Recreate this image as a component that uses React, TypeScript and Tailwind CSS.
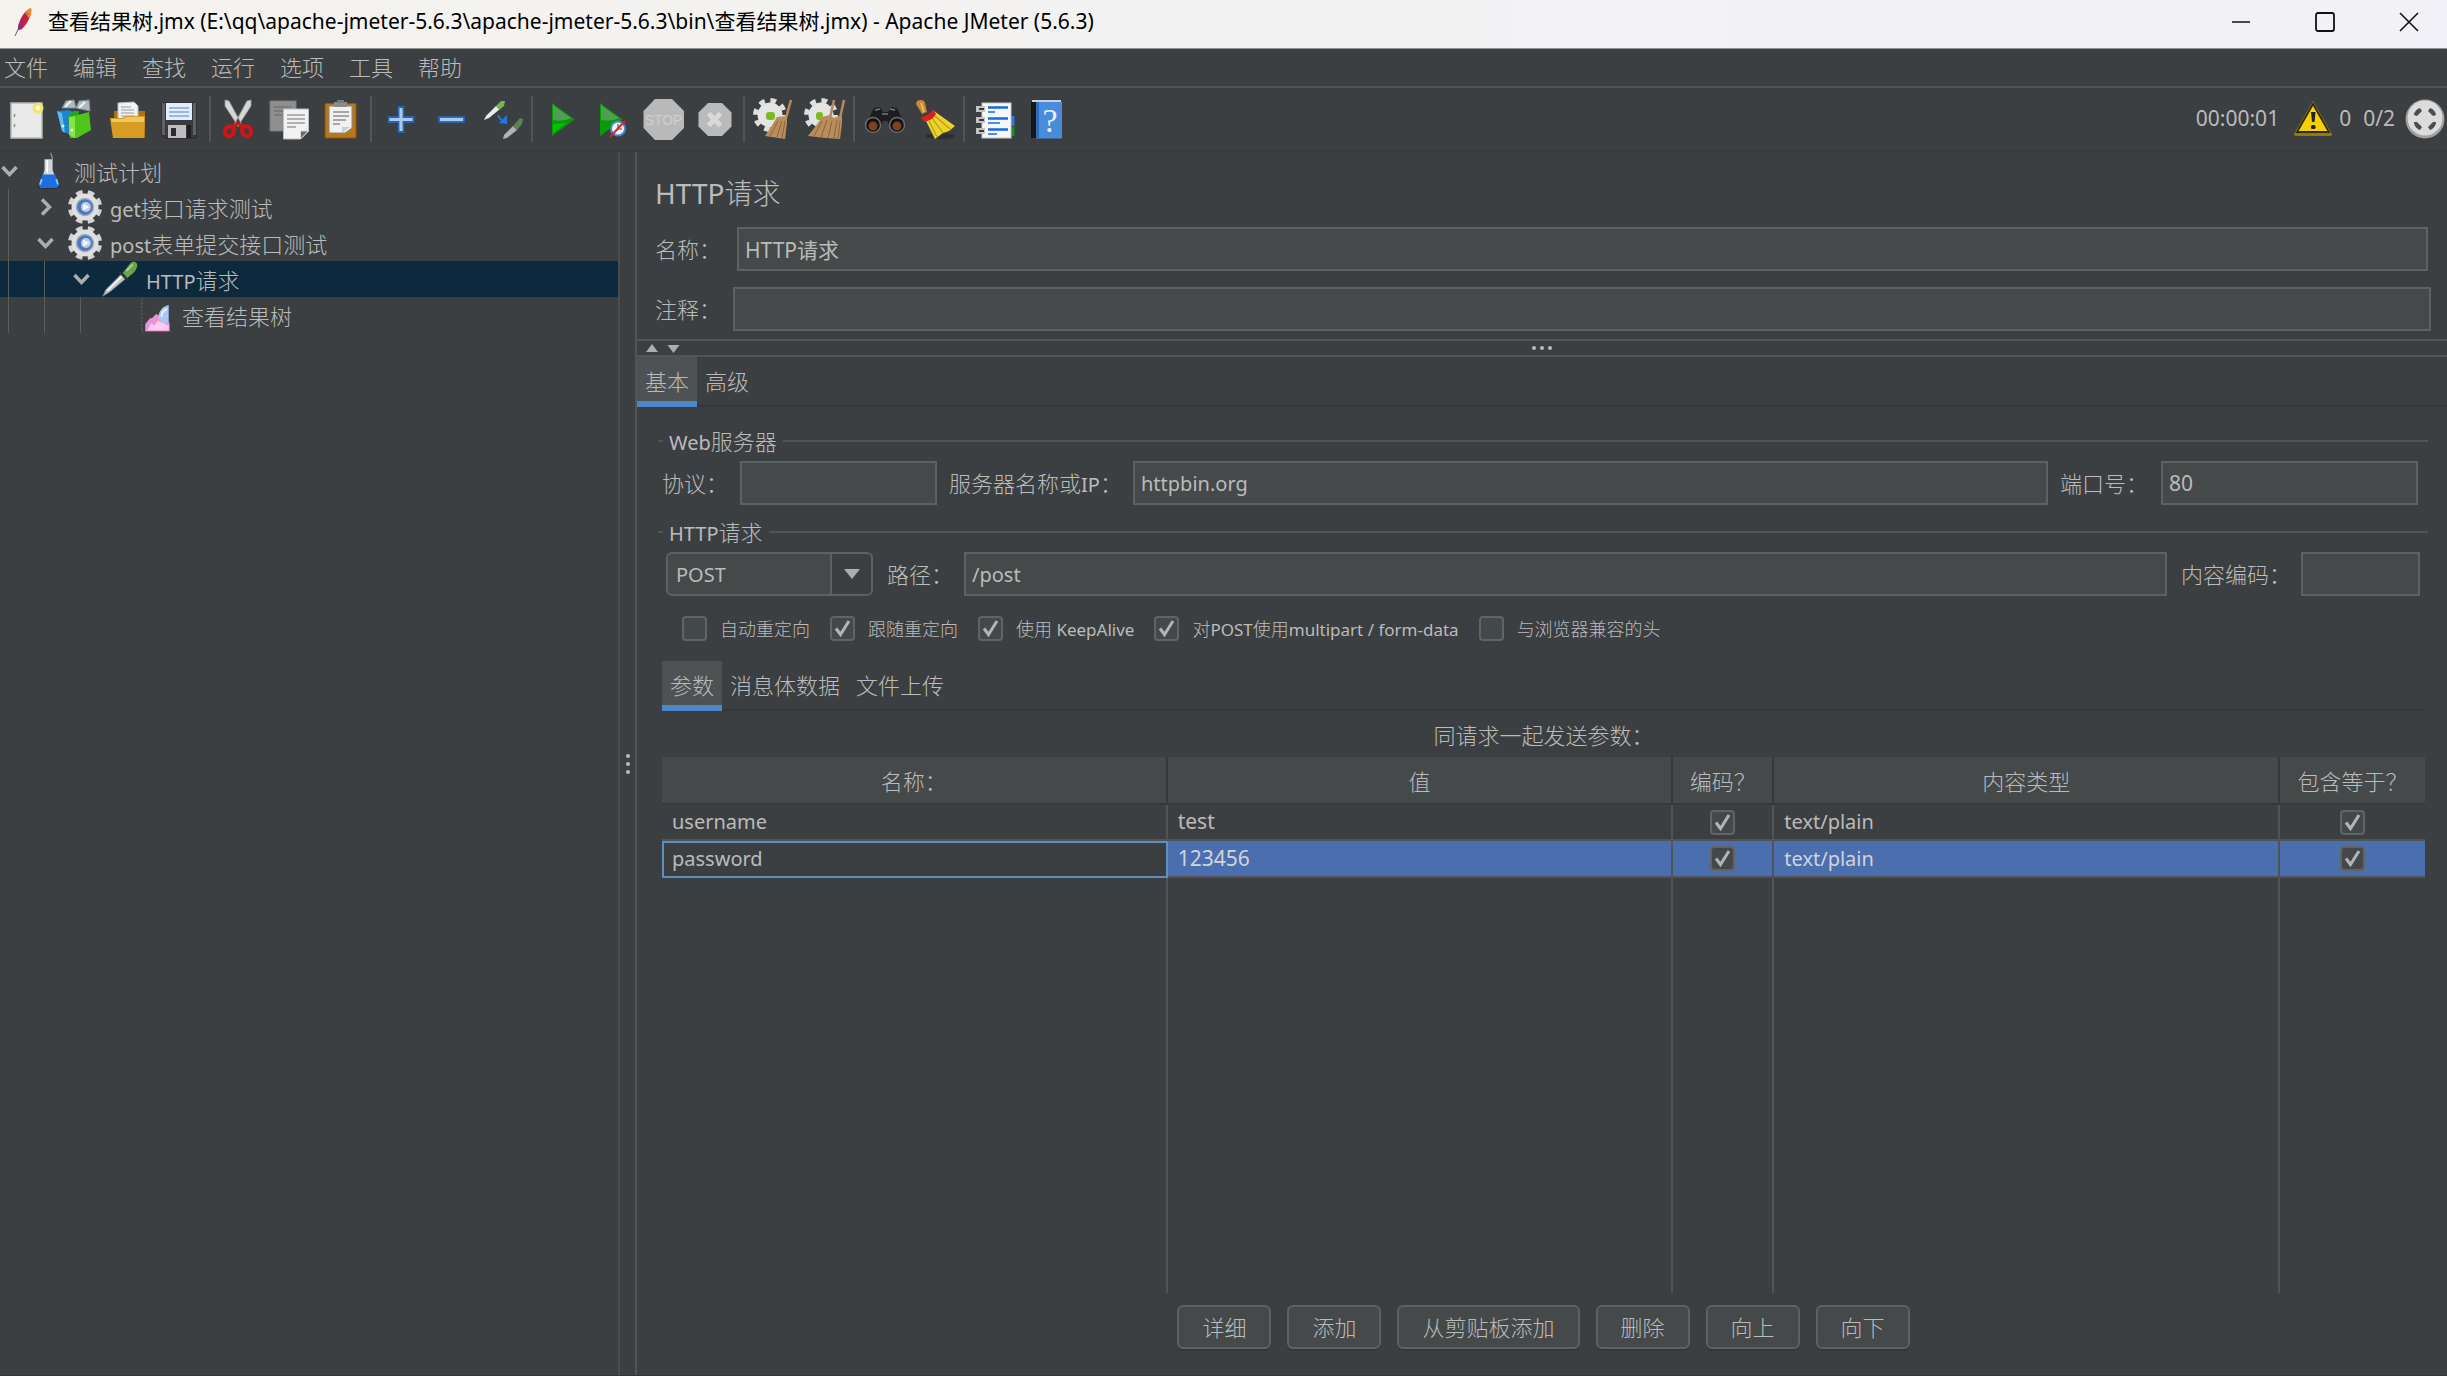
import React, { useState } from 'react';

type IconProps = { children: React.ReactNode; className?: string };

function Svg({ children, className = 'h-10 w-10' }: IconProps) {
  return (
    <svg viewBox="0 0 40 40" className={`${className} shrink-0 overflow-visible`} fill="none" aria-hidden="true">
      {children}
    </svg>
  );
}

/* ---------- toolbar icons ---------- */

const NewIcon = () => (
  <Svg>
    <rect x="3" y="4" width="31" height="35" fill="#e9e9e9" stroke="#b9b9b2" strokeWidth="1.5" />
    <path d="M6.500 15v3M6.500 25v3" stroke="#8f8f8f" strokeWidth="1.500" />
    <circle cx="30" cy="9" r="5.500" fill="#efe36a" />
    <circle cx="30" cy="9" r="2.500" fill="#fffbd0" />
  </Svg>
);

const TemplatesIcon = () => (
  <Svg>
    <path d="M3 9l4-7 8-1 2 8zM17 9l3-7 10-1 1 11z" fill="#aebbc2" stroke="#7e8c94" />
    <path d="M6 8l6-6M20 9l6-6" stroke="#eef2f4" strokeWidth="2" />
    <path d="M-2 12l12-1 6 3-4 22-9-4z" fill="#1b85cf" />
    <path d="M-2 12l5 2 3 20-3-2z" fill="#5fb9ee" />
    <path d="M9 18l5-6h6l-2 26-7 1z" fill="#23a51c" />
    <path d="M15 17l15-4 2 18-14 8-7 0z" fill="#4fc51c" />
    <path d="M10 18l6-1v22l-6-3z" fill="#86e24a" />
    <circle cx="13" cy="31" r="1.500" fill="#e9ffe0" />
    <circle cx="4" cy="27" r="1.500" fill="#d5efff" />
  </Svg>
);

const OpenIcon = () => (
  <Svg>
    <path d="M4 12h31v27H4z" fill="#a87414" />
    <path d="M8 4l16-1 4 4v17H8z" fill="#f2f2f2" stroke="#bdbdbd" />
    <path d="M11 8h10M11 11h13M11 14h13M11 17h13" stroke="#9b9b9b" />
    <path d="M0 19h12l4-2h19l-1 22H3z" fill="#d79c24" />
    <path d="M1 20h12l4-2h17v5H2z" fill="#efc662" />
  </Svg>
);

const SaveIcon = () => (
  <Svg>
    <path d="M1 4h34v35H4l-3-3z" fill="#3a3a3e" stroke="#26262a" />
    <path d="M1 4h3v32H1zM32 4h3v32h-3z" fill="#606066" />
    <rect x="5" y="4" width="26" height="17" fill="#e3eefb" />
    <path d="M8 9h20M8 13h20M8 17h20" stroke="#7fa6d6" strokeWidth="1.500" />
    <rect x="7" y="26" width="18" height="13" fill="#bdbdbd" />
    <rect x="10" y="29" width="5" height="8" fill="#2c2c2e" />
    <rect x="26" y="26" width="4" height="13" fill="#1f1f22" />
  </Svg>
);

const CutIcon = () => (
  <Svg>
    <path d="M5 1l4 1 13 24-4 1L5 7zM31 1l-4 1-13 24 4 1L31 7z" fill="#d6d6d6" stroke="#9c9c9c" strokeWidth=".8" />
    <ellipse cx="9.500" cy="32" rx="4.500" ry="5" stroke="#d21414" strokeWidth="4" transform="rotate(25 9 32)" />
    <ellipse cx="26.500" cy="32" rx="4.500" ry="5" stroke="#d21414" strokeWidth="4" transform="rotate(-25 27 32)" />
    <path d="M13 28l5-4 5 4" stroke="#d21414" strokeWidth="3" />
  </Svg>
);

const CopyIcon = () => (
  <Svg>
    <rect x="-1" y="2" width="26" height="30" fill="#8f8f8f" stroke="#7b7b7b" />
    <path d="M3 8h18M3 12h18M3 16h8" stroke="#747474" strokeWidth="1.500" />
    <path d="M12.500 10h25v22l-8 8h-17z" fill="#f2f2f2" stroke="#bcbcbc" />
    <path d="M16 16h18M16 20h18M16 24h18M16 28h9" stroke="#9d9d9d" strokeWidth="1.300" />
    <path d="M29.500 40v-8h8z" fill="#6a6a6a" stroke="#d9d9d9" />
  </Svg>
);

const PasteIcon = () => (
  <Svg>
    <rect x="3" y="4.500" width="31" height="34.500" rx="1" fill="#b9771a" stroke="#8b560d" />
    <path d="M7 7h23v22l-7 5H7z" fill="#f1f1f1" stroke="#7a8a86" />
    <rect x="12" y="3" width="13" height="5" fill="#8c8c86" />
    <path d="M15 1h7v3h-7z" fill="#7b7b76" />
    <path d="M11 13h16M11 17h16M11 21h13M11 25h7" stroke="#8e8e8e" strokeWidth="1.300" />
    <path d="M20 34v-6h8z" fill="#cfcfcf" />
  </Svg>
);

const PlusIcon = () => (
  <Svg>
    <path d="M17.500 8h5v10h10v5h-10v10h-5V23h-10v-5h10z" fill="#a9c9ee" stroke="#2a62ae" strokeWidth="1.800" />
  </Svg>
);

const MinusIcon = () => (
  <Svg>
    <rect x="7" y="18" width="25" height="5" fill="#a9c9ee" stroke="#2a62ae" strokeWidth="1.800" />
  </Svg>
);

const ToggleIcon = () => (
  <Svg>
    <path d="M1 21l2-4L13 7l4 3L6 19z" fill="#ececec" />
    <path d="M13 7l5-5 4 0-1 5-5 4z" fill="#79b356" />
    <path d="M15 16c1 3 3 5 6 6" stroke="#1f74f0" strokeWidth="2" />
    <path d="M24 16v9l-8-1z" fill="#1f74f0" />
    <path d="M20 40l1-4 9-9 4 4-10 8z" fill="#b0b3b0" />
    <path d="M30 27l7-8 3 1-1 5-5 6z" fill="#5f8350" />
  </Svg>
);

const PlayIcon = () => (
  <Svg>
    <path d="M10 4l22.500 16.500L10 37z" fill="#079c07" />
    <path d="M11 6l18 13c-6 3-12 3-18 2z" fill="#4f9f52" />
    <path d="M11 25l13-1-13 10z" fill="#06c206" />
  </Svg>
);

const PlayNoPauseIcon = () => (
  <Svg>
    <path d="M7 4l22.500 16.500L7 37z" fill="#079c07" />
    <path d="M8 6l18 13c-6 3-12 3-18 2z" fill="#4f9f52" />
    <circle cx="25" cy="29.500" r="7" fill="#eef4fb" stroke="#4a86c8" strokeWidth="2" />
    <path d="M25 25v5h4" stroke="#6f7f92" strokeWidth="1.500" />
    <path d="M17 38l15-16" stroke="#d82525" strokeWidth="2" />
  </Svg>
);

const StopIcon = () => (
  <Svg>
    <path d="M11 0h17l12 12v17L28 41H11L-.5 29V12z" fill="#b9b9b9" />
    <text x="19.500" y="26" textAnchor="middle" fontSize="14" fontFamily="Liberation Sans" fill="#cfcfcf">
      STOP
    </text>
  </Svg>
);

const ShutdownIcon = () => (
  <Svg>
    <path d="M13 4h14l9.500 9.500v14L27 37H13l-9.500-9.500v-14z" fill="#bababa" />
    <path d="M13.500 14.500l12 12M25.500 14.500l-12 12" stroke="#d9d9d9" strokeWidth="5" />
  </Svg>
);

function GearBody({ cx, cy }: { cx: number; cy: number }) {
  return (
    <g transform={`translate(${cx} ${cy})`}>
      <circle r="14.500" stroke="#dedede" strokeWidth="5" strokeDasharray="5.700 5.690" />
      <circle r="12.500" fill="#e4e4e4" />
    </g>
  );
}

const ClearIcon = () => (
  <Svg>
    <GearBody cx={16} cy={16} />
    <rect x="12" y="13" width="9" height="8" rx="3" fill="#79bd22" />
    <path d="M37 1l-5 18" stroke="#b58a5a" strokeWidth="2.500" />
    <path d="M23 18l10-1v7l-2 16-20-3 6-9z" fill="#b98d5c" />
    <path d="M24 22l-8 15M28 22l-5 16M31 22l-3 17" stroke="#8d6538" />
  </Svg>
);

const ClearAllIcon = () => (
  <Svg>
    <GearBody cx={16} cy={16} />
    <rect x="11" y="13" width="7" height="8" rx="3" fill="#79bd22" />
    <path d="M29 1l-4 18M39 1l-4 18" stroke="#b58a5a" strokeWidth="2.500" />
    <path d="M17 18l8-2 4 3 8-3v8l-2 16-14-1-18-2 7-9z" fill="#b98d5c" />
    <path d="M17 22l-8 15M22 21l-6 17M27 22l-4 17M32 21l-3 18M35 22l-2 17" stroke="#8d6538" />
  </Svg>
);

const SearchIcon = () => (
  <Svg>
    <path d="M10 9l6-1 3 5h5l3-5 6 1 8 17-4 7-10-3-4-8h-4l-4 8-10 3-4-7z" fill="#1d1d1f" />
    <circle cx="9" cy="26" r="7.500" fill="#111" stroke="#6c6c6c" strokeWidth="1.500" />
    <circle cx="33" cy="26" r="7.500" fill="#111" stroke="#6c6c6c" strokeWidth="1.500" />
    <circle cx="9" cy="27" r="4.500" fill="#7d4220" />
    <circle cx="33" cy="27" r="4.500" fill="#7d4220" />
    <path d="M11 11l5-1M26 10l5 1M18 15h6" stroke="#7b7b7b" strokeWidth="1.500" />
  </Svg>
);

const BroomIcon = () => (
  <Svg>
    <ellipse cx="25" cy="37" rx="15" ry="3" fill="#2c2e2f" />
    <path d="M1 5c0-5 8-5 9-1l2 9-5 2z" fill="#c98a33" />
    <path d="M6 4l3 9" stroke="#f0c679" strokeWidth="1.500" />
    <path d="M10 20l9-8 21 15-6 5-6 2-8 6z" fill="#ecd22e" />
    <path d="M14 22l8 16M17 19l11 15M20 17l15 13" stroke="#b79c12" strokeWidth="1.200" />
    <path d="M6 18c6-1 10-4 12-8l3 5c-3 5-7 7-12 8z" fill="#d42222" />
  </Svg>
);

const FunctionIcon = () => (
  <Svg>
    <rect x="36" y="17" width="4.500" height="10" fill="#2b78d8" />
    <rect x="36" y="28" width="4.500" height="9" fill="#13902a" />
    <rect x="8" y="4" width="29" height="35" fill="#f7f7f7" stroke="#c9c9c9" />
    <path d="M2 10h9M2 21h9M2 32h9" stroke="#c3c3c3" strokeWidth="6" />
    <path d="M5 10h5M5 21h5M5 32h5" stroke="#3d3d3d" strokeWidth="2" />
    <path d="M14 8.500h20M14 19.500h20M14 30.500h20" stroke="#1668e8" strokeWidth="2.500" />
    <path d="M14 13h7M14 24h12M14 35h9" stroke="#4b8df0" strokeWidth="2" />
  </Svg>
);

const HelpIcon = () => (
  <Svg>
    <path d="M6 3l5-1v37H6z" fill="#151618" />
    <path d="M7 2h29" stroke="#c8d3de" strokeWidth="2" />
    <rect x="11" y="3" width="26" height="36.500" fill="#4a8bdc" />
    <path d="M11 3h3v36h-3z" fill="#2f6bb8" />
    <text x="25" y="33" textAnchor="middle" fontSize="34" fontFamily="Liberation Serif" fill="#e6f1ff">
      ?
    </text>
  </Svg>
);

const WarningIcon = () => (
  <Svg>
    <path d="M20 2l19 33a2 2 0 0 1-2 2H3a2 2 0 0 1-2-2z" fill="#8e7b0c" />
    <path d="M20 5l16 28H4z" fill="#f6cf05" stroke="#2d2a10" strokeWidth="1.800" />
    <path d="M18 13h4.500l-1 10h-2.500z" fill="#222" />
    <rect x="18" y="26" width="4.500" height="4" rx="1.500" fill="#222" />
  </Svg>
);

const ThreadsIcon = () => (
  <Svg>
    <circle cx="20" cy="20" r="19.500" fill="#a0a0a0" />
    <circle cx="20" cy="19" r="17.500" fill="#dcdcdc" />
    <path
      d="M9 16c0-3 3-6 6-7l2 3-5 5zM31 16c0-3-3-6-6-7l-2 3 5 5zM9 23c0 4 3 7 6 8l2-3-5-5zM31 23c0 4-3 7-6 8l-2-3 5-5z"
      fill="#4b4d4e"
    />
  </Svg>
);

/* ---------- tree icons ---------- */

const FlaskIcon = () => (
  <Svg className="h-9 w-9">
    <ellipse cx="20" cy="38" rx="13" ry="2" fill="#2d3032" />
    <path d="M22 0l2 7" stroke="#8d9194" strokeWidth="1.500" />
    <path d="M15 7h9v12l6 16c0 3-2 4-4 4H13c-2 0-4-1-3-4l5-16z" fill="#cdd5da" />
    <path d="M13 24l14 0 4 11c0 3-2 4-4 4H13c-2 0-4-1-4-4z" fill="#1b6fe0" />
    <path d="M12 29l-2 6M28 29l2 6" stroke="#8fc2ff" strokeWidth="2" />
    <path d="M18 8v14" stroke="#ffffff" strokeWidth="2" />
  </Svg>
);

const GearIcon = () => (
  <Svg className="h-9 w-9">
    <circle cx="20" cy="20" r="16" stroke="#d4d4d4" strokeWidth="6" strokeDasharray="7 5.566" transform="rotate(9 20 20)" />
    <circle cx="20" cy="20" r="15" fill="#e0e0e0" />
    <circle cx="20" cy="20" r="9.500" fill="#5478b4" stroke="#9db0ce" strokeWidth="1.500" />
    <circle cx="21" cy="20" r="5.500" fill="#b9cdea" />
    <path d="M18 16l7 4-7 4z" fill="#f4f8fd" />
  </Svg>
);

const DropperIcon = () => (
  <Svg className="h-9 w-9">
    <path d="M0 39l3-7 18-18 5 5L8 34z" fill="#c2c6c4" stroke="#7d8280" />
    <path d="M5 33l17-17" stroke="#f5f5f5" strokeWidth="2" />
    <path d="M18 12l9 9" stroke="#2f3331" strokeWidth="2.500" />
    <path d="M22 13l8-10c3-4 9-2 8 3-1 3-2 5-4 7l-7 6z" fill="#6aa34c" />
    <path d="M26 11l7-7" stroke="#a8d68a" strokeWidth="2" />
  </Svg>
);

const ResultsIcon = () => (
  <Svg className="h-9 w-9">
    <path d="M3 2v36h33" stroke="#5a5d5e" strokeWidth="1.500" strokeDasharray="2 2" />
    <path d="M7 38V30l5-6 3-1 4-4 8 4 7 6v9z" fill="#f090d4" />
    <path d="M9 37l5-8 3 3 4-6 12 6v5z" fill="#f8cdee" />
    <path d="M33 9v19c-6 3-13-2-11-8 1-6 6-10 11-11z" fill="#a9c8f5" />
    <path d="M31 13c-4 2-6 5-6 9" stroke="#edf5ff" strokeWidth="2" />
  </Svg>
);

const FeatherIcon = () => (
  <svg viewBox="0 0 18 30" className="h-[30px] w-[18px] shrink-0" fill="none" aria-hidden="true">
    <path d="M17 1c1 5-2 14-9 21l-4 1c0-8 5-19 13-22z" fill="#c9203f" />
    <path d="M17 1c1 3 0 6-2 10l-4-5c2-3 4-4 6-5z" fill="#f08a24" />
    <path d="M4 23l4-1-3-6c-1 3-1 5-1 7z" fill="#8c2a78" />
    <path d="M14 6C9 12 5 20 1 29" stroke="#6a3a8c" strokeWidth=".9" />
  </svg>
);

function Chevron({ open }: { open: boolean }) {
  return (
    <svg viewBox="0 0 20 20" className="h-5 w-5 shrink-0" fill="none" stroke="#adadad" strokeWidth="3.500" aria-hidden="true">
      {open ? <path d="M2.500 6l7 7.500 7-7.500" /> : <path d="M6 2.500l7.500 7.500L6 17.500" />}
    </svg>
  );
}

/* ---------- data ---------- */

const MENUS = ['文件', '编辑', '查找', '运行', '选项', '工具', '帮助'];

const TOOLBAR: { label: string; Icon: React.FC }[][] = [
  [
    { label: '新建', Icon: NewIcon },
    { label: '模板', Icon: TemplatesIcon },
    { label: '打开', Icon: OpenIcon },
    { label: '保存', Icon: SaveIcon },
  ],
  [
    { label: '剪切', Icon: CutIcon },
    { label: '复制', Icon: CopyIcon },
    { label: '粘贴', Icon: PasteIcon },
  ],
  [
    { label: '展开', Icon: PlusIcon },
    { label: '收起', Icon: MinusIcon },
    { label: '切换', Icon: ToggleIcon },
  ],
  [
    { label: '启动', Icon: PlayIcon },
    { label: '不停顿启动', Icon: PlayNoPauseIcon },
    { label: '停止', Icon: StopIcon },
    { label: '关闭', Icon: ShutdownIcon },
  ],
  [
    { label: '清除', Icon: ClearIcon },
    { label: '清除全部', Icon: ClearAllIcon },
  ],
  [
    { label: '查找', Icon: SearchIcon },
    { label: '重置查找', Icon: BroomIcon },
  ],
  [
    { label: '函数助手', Icon: FunctionIcon },
    { label: '帮助', Icon: HelpIcon },
  ],
];

const TREE: { label: string; depth: number; open?: boolean; leaf?: boolean; Icon: React.FC }[] = [
  { label: '测试计划', depth: 0, open: true, Icon: FlaskIcon },
  { label: 'get接口请求测试', depth: 1, open: false, Icon: GearIcon },
  { label: 'post表单提交接口测试', depth: 1, open: true, Icon: GearIcon },
  { label: 'HTTP请求', depth: 2, open: true, Icon: DropperIcon },
  { label: '查看结果树', depth: 3, leaf: true, Icon: ResultsIcon },
];

const OPTIONS = [
  { id: 'auto', label: '自动重定向', on: false },
  { id: 'follow', label: '跟随重定向', on: true },
  { id: 'keep', label: '使用 KeepAlive', on: true },
  { id: 'multi', label: '对POST使用multipart / form-data', on: true },
  { id: 'compat', label: '与浏览器兼容的头', on: false },
];

const PARAMS = [
  { name: 'username', value: 'test', type: 'text/plain' },
  { name: 'password', value: '123456', type: 'text/plain' },
];

const ACTIONS = ['详细', '添加', '从剪贴板添加', '删除', '向上', '向下'];

/* ---------- controls ---------- */

const FIELD = 'h-11 min-w-0 border-2 border-[#5e6161] bg-[#45494a] px-1.5 text-[#bbbbbb] outline-none';

// Latin runs are set a little smaller than the Chinese around them
function Mixed({ text, small }: { text: string; small?: boolean }) {
  const latin = small ? 'text-[17px]' : 'text-[20px]';
  const han = small ? 'text-[18px] font-light' : 'text-[22px] font-light';
  return (
    <>
      {text.split(/([\x20-\x7e]+)/).map((part, i) => (
        <span key={i} className={i % 2 ? latin : han}>
          {part}
        </span>
      ))}
    </>
  );
}

function Check({ id, on, label }: { id?: string; on: boolean; label?: string }) {
  return (
    <span className="relative inline-flex h-[25px] w-[25px] shrink-0">
      <input
        id={id}
        type="checkbox"
        defaultChecked={on}
        aria-label={label}
        className="peer h-[25px] w-[25px] appearance-none rounded-[4px] border-2 border-[#616465] bg-[#43494a]"
      />
      <svg
        viewBox="0 0 25 25"
        className="pointer-events-none absolute inset-0 hidden peer-checked:block"
        fill="none"
        stroke="#b4b4b4"
        strokeWidth="3"
        aria-hidden="true"
      >
        <path d="M6 12.500l4.500 6L19 5" />
      </svg>
    </span>
  );
}

function Tabs({ items, active, onPick }: { items: string[]; active: number; onPick: (i: number) => void }) {
  return (
    <div role="tablist" className="flex h-[50px] border-b-2 border-[#35383a]">
      {items.map((t, i) => (
        <button
          key={t}
          role="tab"
          aria-selected={i === active}
          onClick={() => onPick(i)}
          className={
            i === active
              ? 'h-[50px] border-b-6 border-[#4a88c7] bg-[#4e5254] px-2 pt-1 text-[22px] font-light'
              : 'h-[50px] border-b-6 border-transparent px-2 pt-1 text-[22px] font-light'
          }
        >
          {t}
        </button>
      ))}
    </div>
  );
}

function GroupTitle({ children }: { children: string }) {
  return (
    <div className="flex h-8 items-center">
      <span className="h-0.5 w-[5px] bg-[#515455]" />
      <h2 className="mx-1.5">
        <Mixed text={children} />
      </h2>
      <span className="h-0.5 flex-1 bg-[#515455]" />
    </div>
  );
}

export default function App() {
  const [tab, setTab] = useState(0);
  const [paramTab, setParamTab] = useState(0);
  const [selectedNode, setSelectedNode] = useState(3);

  return (
    <div className="flex h-screen flex-col overflow-hidden border-b border-[#323536] bg-[#3c3f41] font-['Noto_Sans','Noto_Sans_CJK_SC',sans-serif] text-[#bbbbbb]">
      {/* Title bar */}
      <header className="flex h-[49px] shrink-0 items-center border-b border-[#8e9392] bg-linear-to-r from-[#f4f3ee] to-[#f2f1f7] pb-1 pl-3.5 text-black">
        <FeatherIcon />
        <h1 className="ml-4 flex-1 text-[21px] whitespace-nowrap">
          查看结果树.jmx (E:\qq\apache-jmeter-5.6.3\apache-jmeter-5.6.3\bin\查看结果树.jmx) - Apache JMeter (5.6.3)
        </h1>
        <div className="flex">
          <button aria-label="最小化" className="flex w-[84px] justify-center">
            <svg viewBox="0 0 20 20" className="h-5 w-5" stroke="#111" strokeWidth="1.500" fill="none">
              <path d="M1 10h18" />
            </svg>
          </button>
          <button aria-label="最大化" className="flex w-[84px] justify-center">
            <svg viewBox="0 0 20 20" className="h-5 w-5" stroke="#111" strokeWidth="1.800" fill="none">
              <rect x="1" y="1" width="18" height="18" rx="2" />
            </svg>
          </button>
          <button aria-label="关闭窗口" className="flex w-20 justify-center pl-1">
            <svg viewBox="0 0 20 20" className="h-5 w-5" stroke="#111" strokeWidth="1.600" fill="none">
              <path d="M1 1l18 18M19 1L1 19" />
            </svg>
          </button>
        </div>
      </header>

      {/* Menu */}
      <nav className="flex h-[39px] shrink-0 items-center gap-[25px] border-b-2 border-[#515455] pl-1">
        {MENUS.map((m) => (
          <button key={m} className="text-[22px] font-light">
            {m}
          </button>
        ))}
      </nav>

      {/* Toolbar */}
      <div className="flex h-16 shrink-0 items-center border-b-2 border-[#383b3d] pl-0.5 pr-0.5">
        {TOOLBAR.map((group, g) => (
          <React.Fragment key={g}>
            {g > 0 && (
              <span className="flex w-2 justify-center">
                <span className="h-[46px] w-0.5 bg-[#515455]" />
              </span>
            )}
            {group.map(({ label, Icon }) => (
              <button key={label} aria-label={label} className="flex w-[51px] shrink-0 justify-center">
                <Icon />
              </button>
            ))}
          </React.Fragment>
        ))}
        <div className="ml-auto flex items-center text-[21px]">
          <span>00:00:01</span>
          <span className="mr-1.5 ml-3.5">
            <WarningIcon />
          </span>
          <span>0</span>
          <span className="mr-2.5 ml-3">0/2</span>
          <ThreadsIcon />
        </div>
      </div>

      <div className="flex min-h-0 flex-1">
        {/* Test plan tree */}
        <aside className="w-[620px] shrink-0 border-r-2 border-[#4a4d4e]">
          <ul role="tree" className="pt-px">
            {TREE.map(({ label, depth, open, leaf, Icon }, i) => (
              <li
                key={label}
                role="treeitem"
                aria-selected={i === selectedNode}
                onClick={() => setSelectedNode(i)}
                className={i === selectedNode ? 'flex h-9 items-center bg-[#0d293e]' : 'flex h-9 items-center'}
              >
                {Array.from({ length: depth }, (_, d) => (
                  <span key={d} className="ml-2 h-full w-7 shrink-0 border-l border-[#5a5d5e]" />
                ))}
                <span className="w-5 shrink-0">{!leaf && <Chevron open={!!open} />}</span>
                <span className="mx-[11px]">
                  <Icon />
                </span>
                <span className="-ml-1 pt-0.5">
                  <Mixed text={label} />
                </span>
              </li>
            ))}
          </ul>
        </aside>

        {/* Vertical splitter */}
        <div className="flex w-[15px] shrink-0 flex-col items-center justify-center gap-1">
          <i className="h-1 w-1 rounded-full bg-[#bbbbbb]" />
          <i className="h-1 w-1 rounded-full bg-[#bbbbbb]" />
          <i className="h-1 w-1 rounded-full bg-[#bbbbbb]" />
        </div>

        <main className="flex min-w-0 flex-1 flex-col border-l-2 border-[#515455]">
          <section className="border-b-2 border-[#515455] pt-[23px] pb-2 pl-[18px]">
            <h2 className="text-[28px] leading-9">
              HTTP<span className="font-light">请求</span>
            </h2>
            <div className="mt-4 flex items-center pr-[19px]">
              <label htmlFor="name" className="w-[82px] text-[22px] font-light">
                名称：
              </label>
              <input id="name" defaultValue="HTTP请求" className={`${FIELD} flex-1 text-[21px]`} />
            </div>
            <div className="mt-4 flex items-center pr-4">
              <label htmlFor="comment" className="w-[78px] text-[22px] font-light">
                注释：
              </label>
              <input id="comment" className={`${FIELD} flex-1 text-[21px]`} />
            </div>
          </section>

          {/* Horizontal splitter */}
          <div className="flex h-4 shrink-0 items-center border-b-2 border-[#515455] pl-[9px]">
            <svg viewBox="0 0 34 10" className="h-2.5 w-[34px]" fill="#adadad" aria-hidden="true">
              <path d="M0 9l6-8 6 8zM21.500 2h12l-6 8z" />
            </svg>
            <div className="flex flex-1 items-center justify-center gap-1 pr-[43px]">
              <i className="h-1 w-1 rounded-full bg-[#bbbbbb]" />
              <i className="h-1 w-1 rounded-full bg-[#bbbbbb]" />
              <i className="h-1 w-1 rounded-full bg-[#bbbbbb]" />
            </div>
          </div>

          <Tabs items={['基本', '高级']} active={tab} onPick={setTab} />

          <section className="flex min-h-0 flex-1 flex-col pt-[18px] pr-[19px] pb-[26px] pl-[21px]">
            <GroupTitle>Web服务器</GroupTitle>
            <div className="mt-1 flex items-center pr-2.5 pl-1">
              <label htmlFor="protocol" className="w-[78px] text-[22px] font-light">
                协议：
              </label>
              <input id="protocol" className={`${FIELD} w-[197px] text-[20px]`} />
              <label htmlFor="server" className="ml-3 w-[184px] whitespace-nowrap">
                <Mixed text="服务器名称或IP：" />
              </label>
              <input id="server" defaultValue="httpbin.org" className={`${FIELD} flex-1 text-[20px]`} />
              <label htmlFor="port" className="ml-3 w-[101px] text-[22px] font-light">
                端口号：
              </label>
              <input id="port" defaultValue="80" className={`${FIELD} w-[257px] text-[21px]`} />
            </div>

            <div className="mt-[11px]">
              <GroupTitle>HTTP请求</GroupTitle>
            </div>
            <div className="mt-1 flex items-center pr-2 pl-2">
              <div className="relative w-[207px]">
                <select
                  aria-label="方法"
                  className="h-11 w-full appearance-none rounded-md border-2 border-[#5e6161] bg-[#45494a] px-2 pt-0.5 text-[20px] outline-none"
                >
                  <option>POST</option>
                  <option>GET</option>
                </select>
                <span className="pointer-events-none absolute inset-y-0.5 right-0.5 flex w-[41px] items-center justify-center rounded-r-sm border-l-2 border-[#5e6161] bg-[#3c3f41]">
                  <svg viewBox="0 0 16 10" className="h-2.5 w-4" fill="#adadad" aria-hidden="true">
                    <path d="M0 0h16L8 10z" />
                  </svg>
                </span>
              </div>
              <label htmlFor="path" className="ml-3.5 w-[77px] text-[22px] font-light">
                路径：
              </label>
              <input id="path" defaultValue="/post" className={`${FIELD} flex-1 text-[20px]`} />
              <label htmlFor="encoding" className="ml-3.5 w-[120px] text-[22px] font-light">
                内容编码：
              </label>
              <input id="encoding" className={`${FIELD} w-[119px] text-[20px]`} />
            </div>

            <div className="mt-[19px] flex items-center gap-5 pl-6">
              {OPTIONS.map((o) => (
                <div key={o.id} className="flex h-[26px] items-center gap-[13px]">
                  <Check id={o.id} on={o.on} />
                  <label htmlFor={o.id} className="pt-0.5 whitespace-nowrap">
                    <Mixed text={o.label} small />
                  </label>
                </div>
              ))}
            </div>

            <div className="mt-5 flex min-h-0 flex-1 flex-col pr-[3px] pl-1">
              <Tabs items={['参数', '消息体数据', '文件上传']} active={paramTab} onPick={setParamTab} />
              <p className="h-[46px] pt-[3px] text-center text-[22px] leading-[42px] font-light">同请求一起发送参数：</p>

              <div className="min-h-0 flex-1">
                <table className="h-full w-full table-fixed border-separate border-spacing-0 text-[20px]">
                  <colgroup>
                    <col />
                    <col />
                    <col className="w-[101px]" />
                    <col />
                    <col className="w-[145px]" />
                  </colgroup>
                  <thead>
                    <tr className="h-12 bg-[#45494a] text-[22px]">
                      {['名称：', '值', '编码？', '内容类型', '包含等于？'].map((h) => (
                        <th
                          key={h}
                          className="border-r-2 border-b-2 border-[#35393a] p-0 pt-0.5 font-light last:border-r-0"
                        >
                          {h}
                        </th>
                      ))}
                    </tr>
                  </thead>
                  <tbody className="[&_td]:border-r-2 [&_td]:border-[#515455] [&_td]:px-2.5 [&_td]:py-0 [&_td:last-child]:border-r-0">
                    {PARAMS.map((p, i) => {
                      const picked = i === 1;
                      return (
                        <tr
                          key={p.name}
                          className={
                            picked
                              ? 'h-[37px] bg-[#4b6eaf] text-[#d0d4dc] [&_td]:border-b-2'
                              : 'h-9 [&_td]:border-b-2'
                          }
                        >
                          <td
                            className={
                              picked ? 'bg-[#3c3f41] text-[#bbbbbb] outline-2 -outline-offset-2 outline-[#5f8fbd]' : ''
                            }
                          >
                            {p.name}
                          </td>
                          <td className="text-[21px]">{p.value}</td>
                          <td>
                            <span className="flex justify-center">
                              <Check on label="编码" />
                            </span>
                          </td>
                          <td>{p.type}</td>
                          <td>
                            <span className="flex justify-center">
                              <Check on label="包含等于" />
                            </span>
                          </td>
                        </tr>
                      );
                    })}
                    <tr>
                      <td />
                      <td />
                      <td />
                      <td />
                      <td />
                    </tr>
                  </tbody>
                </table>
              </div>

              <div className="mt-3 flex justify-center gap-4">
                {ACTIONS.map((a) => (
                  <button
                    key={a}
                    className="h-11 rounded-md border-2 border-[#5e6161] bg-[#45494a] px-[23px] text-[22px] font-light shadow-[0_2px_0_#35383a]"
                  >
                    {a}
                  </button>
                ))}
              </div>
            </div>
          </section>
        </main>
      </div>
    </div>
  );
}
